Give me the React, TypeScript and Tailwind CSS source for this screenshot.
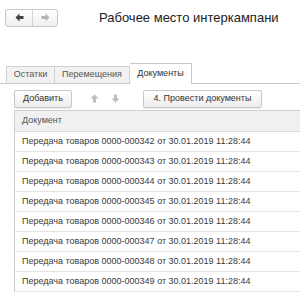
const rows = ["342", "343", "344", "345", "346", "347", "348", "349"];

// filled block arrow, pointing up; rotated for other directions
const BlockArrow = ({ rotate, color }: { rotate: number; color: string }) => (
  <svg width="9" height="9" viewBox="0 0 10 10" style={{ transform: `rotate(${rotate}deg)` }}>
    <path d="M5 0.5 L9.5 5 L6.6 5 L6.6 9.5 L3.4 9.5 L3.4 5 L0.5 5 Z" fill={color} />
  </svg>
);

const App = () => {
  return (
    <div className="w-[300px] h-[297px] overflow-hidden bg-white text-[#333] font-['Liberation_Sans',Arial,sans-serif]">
      <div className="flex items-center h-[29px] pt-[6px] pl-[5px]">
        <div className="flex h-[18px] border border-[#c8c8c8] rounded-[3px] bg-gradient-to-b from-white to-[#f0f0f0]">
          <div className="w-[27px] flex items-center justify-center border-r border-[#d4d4d4]">
            <BlockArrow rotate={-90} color="#444" />
          </div>
          <div className="w-[24px] flex items-center justify-center">
            <BlockArrow rotate={90} color="#b4b4b4" />
          </div>
        </div>
        <div className="ml-[41px] text-[13px] text-[#222] leading-none whitespace-nowrap">Рабочее место интеркампани</div>
      </div>
      <div className="mt-[35px] flex items-end h-[20px] pl-[6px] border-b border-[#c8c8c8]">
        <div className="w-[49px] h-[17px] flex items-center justify-center text-[9px] bg-[#f2f2f2] border border-b-0 border-[#d0d0d0] text-[#555]">Остатки</div>
        <div className="w-[75px] h-[17px] flex items-center justify-center text-[9px] bg-[#f2f2f2] border border-l-0 border-b-0 border-[#d0d0d0] text-[#555]">Перемещения</div>
        <div className="w-[62px] h-[21px] -mb-px flex items-center justify-center text-[9px] bg-white border border-l-0 border-b-0 border-[#c8c8c8] text-[#333]">Документы</div>
      </div>
      <div className="pl-[14px] pt-[5px]">
        <div className="flex items-center h-[19px]">
          <div className="w-[58px] h-[18px] flex items-center justify-center text-[9px] border border-[#c8c8c8] rounded-[2px] bg-gradient-to-b from-white to-[#ededed] shadow-[0_1px_1px_rgba(0,0,0,0.08)]">Добавить</div>
          <div className="ml-[12px] w-[42px] h-[18px] flex items-center justify-around">
            <BlockArrow rotate={0} color="#bdbdbd" />
            <BlockArrow rotate={180} color="#bdbdbd" />
          </div>
          <div className="ml-[17px] w-[119px] h-[18px] flex items-center justify-center text-[9px] border border-[#c8c8c8] rounded-[2px] bg-gradient-to-b from-white to-[#ededed] shadow-[0_1px_1px_rgba(0,0,0,0.08)]">4. Провести документы</div>
        </div>
        <div className="mt-[2px] border-l border-t border-[#cfcfcf]">
          <div className="h-[21px] bg-[#f0f0f0] flex items-center pl-[7px] text-[9px] text-[#555] border-b border-[#dcdcdc]">Документ</div>
          {rows.map((n) => (
            <div key={n} className="h-[20px] flex items-center pl-[7px] text-[9px] text-[#3a3a3a] border-b border-[#e4e4e4] whitespace-nowrap">
              Передача товаров 0000-000{n} от 30.01.2019 11:28:44
            </div>
          ))}
        </div>
      </div>
    </div>
  );
};

export default App;
